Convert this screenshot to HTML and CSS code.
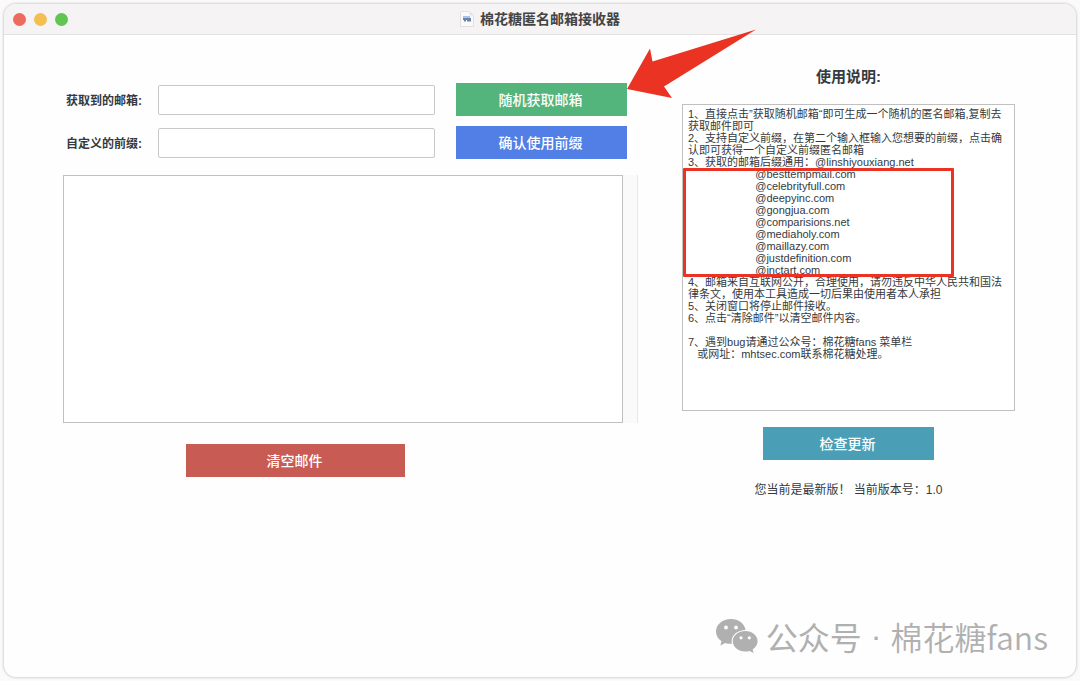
FILE: index.html
```html
<!DOCTYPE html>
<html lang="zh-CN">
<head>
  <meta charset="UTF-8">
  <title>棉花糖匿名邮箱接收器</title>
  <meta name="viewport" content="width=device-width, initial-scale=1.0">
  <link rel="stylesheet" href="styles.css">
</head>
<body>
  <div class="window">
    <header class="titlebar">
      <div class="lights">
        <span class="light close"></span>
        <span class="light minimize"></span>
        <span class="light zoom"></span>
      </div>
      <h1 class="title">
        <svg class="doc-icon" viewBox="0 0 14 16" aria-hidden="true">
          <path d="M1 .5h8.500L13.500 4.500v11H.5V1z" fill="#fafafa" stroke="#e0e0e0"/>
          <path d="M9.500 .5v4h4z" fill="#e4e4e4"/>
          <path d="M3 5h7v3H3z" fill="#a9c3e6"/>
          <path d="M3 7h8v2H3z" fill="#5f86bf"/>
          <path d="M4 9h2v1.500H4zM7 9h4v1.500H7z" fill="#7b8089"/>
        </svg>
        棉花糖匿名邮箱接收器
      </h1>
    </header>

    <main class="content">
      <section class="mail">
        <div class="row">
          <label for="address">获取到的邮箱:</label>
          <input type="text" id="address">
          <div class="action">
            <button type="button" class="btn green">随机获取邮箱</button>
            <svg class="arrow" viewBox="0 0 130 70" aria-hidden="true">
              <path d="M0 60 23 19.500 25.500 32.500 129 .5 37 57.500 45 69z" fill="#ea3323"/>
            </svg>
          </div>
        </div>
        <div class="row">
          <label for="prefix">自定义的前缀:</label>
          <input type="text" id="prefix">
          <div class="action">
            <button type="button" class="btn blue">确认使用前缀</button>
          </div>
        </div>
        <div class="inbox">
          <textarea aria-label="邮件内容"></textarea>
          <div class="scrollbar"></div>
        </div>
        <div class="clear">
          <button type="button" class="btn red">清空邮件</button>
        </div>
      </section>

      <section class="help">
        <label class="help-title" for="guide">使用说明:</label>
        <div class="guide">
          <textarea id="guide" readonly>1、直接点击”获取随机邮箱“即可生成一个随机的匿名邮箱,复制去获取邮件即可
2、支持自定义前缀，在第二个输入框输入您想要的前缀，点击确认即可获得一个自定义前缀匿名邮箱
3、获取的邮箱后缀通用：@linshiyouxiang.net
                      @besttempmail.com
                      @celebrityfull.com
                      @deepyinc.com
                      @gongjua.com
                      @comparisions.net
                      @mediaholy.com
                      @maillazy.com
                      @justdefinition.com
                      @inctart.com
4、邮箱来自互联网公开，合理使用，请勿违反中华人民共和国法律条文，使用本工具造成一切后果由使用者本人承担
5、关闭窗口将停止邮件接收。
6、点击“清除邮件”以清空邮件内容。

7、遇到bug请通过公众号：棉花糖fans 菜单栏
   或网址：mhtsec.com联系棉花糖处理。</textarea>
          <div class="marker"></div>
        </div>
        <button type="button" class="btn teal">检查更新</button>
        <p class="version">您当前是最新版！ 当前版本号：1.0</p>
      </section>
    </main>

    <footer class="account">
      <svg class="wechat" viewBox="0 0 42 34" aria-hidden="true">
        <path d="M15 0C6.500 0 0 5.500 0 12.500c0 4 2 7.300 5.500 9.700L4.300 26.500l5-2.600c1.900.6 3.800.9 6.700.9A11 11 0 0 1 15.700 22C15.700 16 21.500 11 29.600 11 28.500 4.500 22.500 0 15 0z"/>
        <path d="M29.300 12C22.200 12 16.800 16.500 16.800 22.200S22.200 32.500 29.300 32.500c1.500 0 3-.2 4.300-.6l4 2.100-1-3.600c3-2 5-4.800 5-8.200C41.600 16.500 36.200 12 29.300 12z"/>
        <g fill="#fefefe">
          <circle cx="10" cy="8.500" r="1.900"/>
          <circle cx="20" cy="8.500" r="1.900"/>
          <circle cx="25" cy="18.800" r="1.600"/>
          <circle cx="33.300" cy="18.800" r="1.600"/>
        </g>
      </svg>
      <span>公众号</span>
      <span class="dot">·</span>
      <span class="name">棉花糖fans</span>
    </footer>
  </div>
</body>
</html>
```

FILE: styles.css
```css
* { box-sizing: border-box; }
body {
  margin: 0;
  padding: 4px;
  background: #fafafa;
  color: #343a40;
  font-family: "Liberation Sans", "Noto Sans CJK SC", sans-serif;
  font-size: 12px;
}
.window {
  display: flex;
  flex-direction: column;
  min-height: calc(100vh - 8px);
  background: #fefefe;
  border-radius: 12px;
  box-shadow: 0 0 3px rgba(0, 0, 0, 0.3);
}

/* title bar */
.titlebar {
  position: relative;
  display: flex;
  align-items: center;
  justify-content: center;
  height: 31px;
  background: #f5f3f4;
  border-bottom: 1px solid #e2e0e1;
  border-radius: 12px 12px 0 0;
}
.lights { position: absolute; left: 9px; top: 9px; display: flex; gap: 8px; }
.light { width: 13px; height: 13px; border-radius: 50%; }
.close { background: #ec6a5e; }
.minimize { background: #f4bf4f; }
.zoom { background: #61c554; }
.title {
  display: flex;
  align-items: center;
  gap: 6px;
  margin: 0;
  font-size: 14px;
  line-height: 20px;
  color: #444;
}
.doc-icon { width: 14px; height: 16px; }

/* main area */
.content {
  display: grid;
  grid-template-columns: 575fr 333fr;
  gap: 44px;
  padding: 0 61px 0 59px;
}
.mail { padding-top: 48px; }
.row { display: flex; align-items: center; margin-bottom: 10px; padding-right: 11px; }
.row label { width: 95px; padding-left: 3px; font-weight: bold; }
.row input {
  flex: 1;
  min-width: 0;
  height: 30px;
  border: 1px solid #c8c8c8;
  border-radius: 2px;
  background: #fff;
}
.action { position: relative; width: 171px; margin-left: 21px; }
.btn {
  display: block;
  width: 171px;
  height: 33px;
  padding: 0 2px 2px 0;
  border: 0;
  color: #fff;
  font-family: inherit;
  font-size: 14px;
  font-weight: 500;
}
.green { background: #53b57c; }
.blue { background: #527fe5; }
.red { width: 219px; background: #c95b55; }
.teal { background: #4a9fb7; }
.arrow { position: absolute; left: 100%; top: -54px; width: 130px; height: 70px; z-index: 1; }

textarea {
  display: block;
  width: 100%;
  border: 1px solid #c0c0c0;
  border-radius: 0;
  background: #fff;
  color: inherit;
  resize: none;
  font-family: inherit;
  font-size: 11px;
  line-height: 12px;
}
.inbox { display: flex; height: 248px; margin-top: 16px; }
.scrollbar { width: 15px; flex-shrink: 0; background: #fafafa; border-right: 1px solid #e8e8e8; }
.clear { display: flex; justify-content: center; margin-top: 21px; padding-right: 110px; }

.help { display: flex; flex-direction: column; align-items: center; padding-top: 30px; }
.help-title { font-size: 15px; font-weight: bold; line-height: 24px; }
.guide { position: relative; width: 100%; margin: 15px 0 16px; }
.guide textarea { height: 307px; padding: 3px 5px; overflow: hidden; }
.marker {
  position: absolute;
  left: 1px;
  top: 64px;
  width: 271px;
  height: 109px;
  border: 3px solid #ea3323;
  border-radius: 1px;
}
.version { margin: 20px 0 0; line-height: 20px; white-space: pre; }

/* public account */
.account {
  display: flex;
  align-items: center;
  justify-content: flex-end;
  margin-top: auto;
  padding: 0 28px 18px 0;
  color: #b0b0b0;
  font-family: "Noto Sans CJK SC", sans-serif;
  font-size: 32px;
  line-height: 46px;
}
.wechat { width: 42px; height: 34px; margin-right: 8px; fill: #b0b0b0; }
.dot { margin: 0 9px; font-family: "Liberation Sans", sans-serif; }
.name { font-weight: 350; }
```
